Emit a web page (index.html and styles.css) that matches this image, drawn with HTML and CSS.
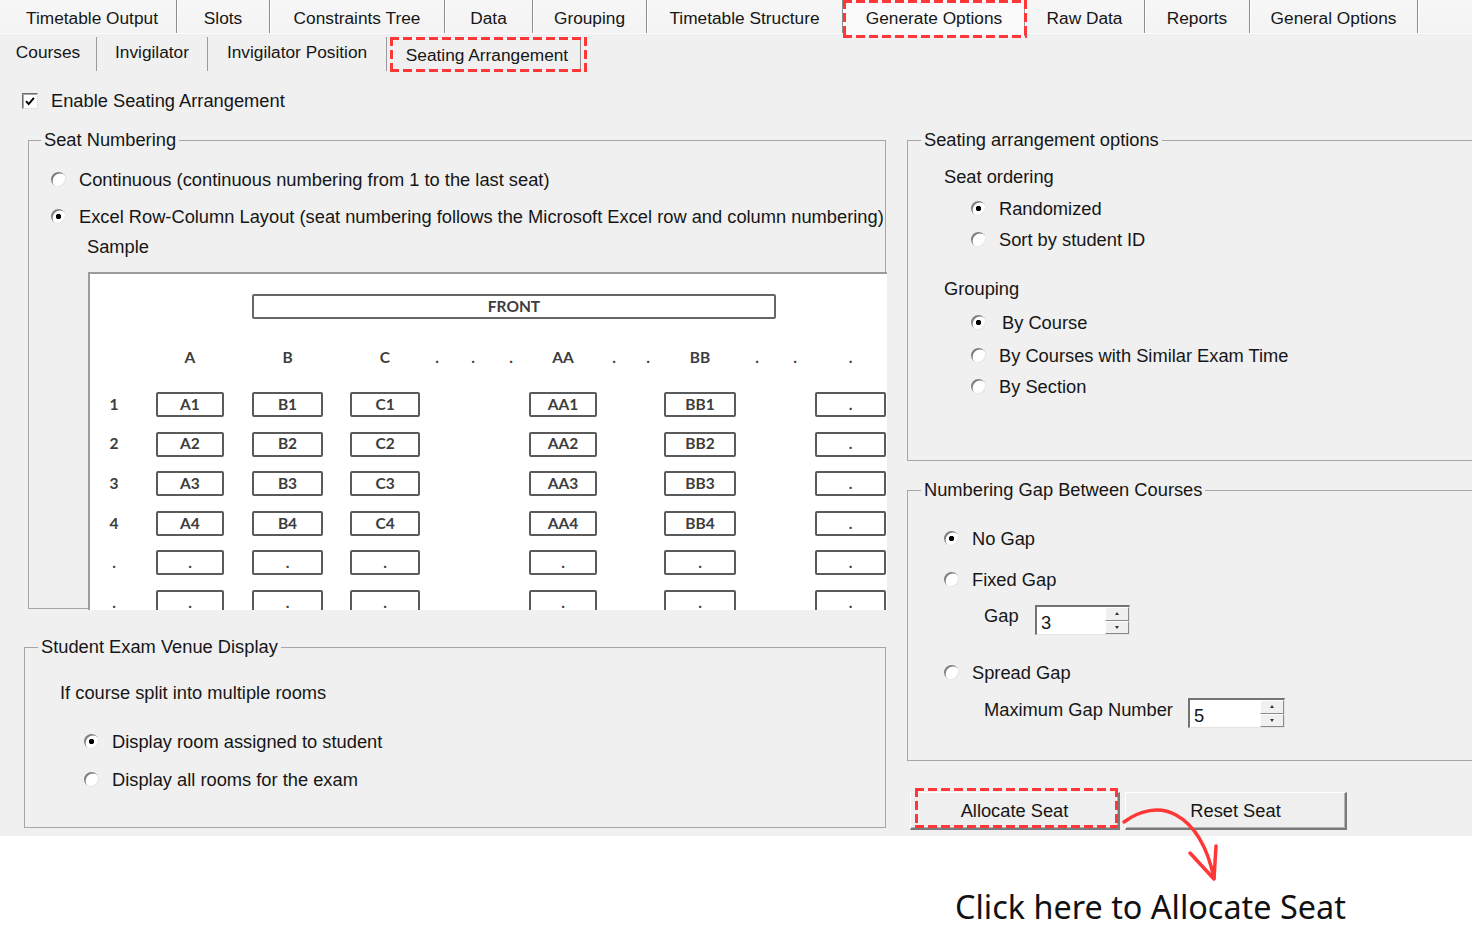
FILE: index.html
```html
<!DOCTYPE html>
<html lang="en">
<head>
<meta charset="utf-8">
<title>Seating Arrangement</title>
<link rel="stylesheet" href="styles.css">
</head>
<body>
<div class="page">
  <div class="app">
    <nav class="tabs tabs-main">
      <div class="tab w1">Timetable Output</div>
      <div class="tab w2">Slots</div>
      <div class="tab w3">Constraints Tree</div>
      <div class="tab w4">Data</div>
      <div class="tab w5">Grouping</div>
      <div class="tab w6">Timetable Structure</div>
      <div class="tab w7 selected hl hl-gen">Generate Options</div>
      <div class="tab w8">Raw Data</div>
      <div class="tab w9">Reports</div>
      <div class="tab w10">General Options</div>
    </nav>
    <nav class="tabs tabs-sub">
      <div class="tab s1">Courses</div>
      <div class="tab s2">Invigilator</div>
      <div class="tab s3">Invigilator Position</div>
      <div class="tab s4 selected hl hl-seat">Seating Arrangement</div>
    </nav>

    <div class="check-row">
      <span class="checkbox"><svg viewBox="0 0 16 16"><path d="M3.5 7.5 6.5 11 12.5 3.8"/></svg></span>
      <span>Enable Seating Arrangement</span>
    </div>

    <div class="columns">
      <div class="col-left">
        <fieldset class="group g-seat">
          <legend>Seat Numbering</legend>
          <div class="radio-row r1"><span class="radio"></span>Continuous (continuous numbering from 1 to the last seat)</div>
          <div class="radio-row r2"><span class="radio on"></span>Excel Row-Column Layout (seat numbering follows the Microsoft Excel row and column numbering)</div>
          <div class="sample-label">Sample</div>
          <div class="sample">
            <div class="front">FRONT</div>
            <div class="seat-grid head">
              <span class="h ca">A</span><span class="h cb">B</span><span class="h cc">C</span>
              <span class="h d1">.</span><span class="h d2">.</span><span class="h d3">.</span>
              <span class="h caa">AA</span>
              <span class="h d4">.</span><span class="h d5">.</span>
              <span class="h cbb">BB</span>
              <span class="h d6">.</span><span class="h d7">.</span>
              <span class="h cz">.</span>
            </div>
            <div class="seat-grid seats">
              <span class="rl">1</span><span class="seat ca">A1</span><span class="seat cb">B1</span><span class="seat cc">C1</span><span class="seat caa">AA1</span><span class="seat cbb">BB1</span><span class="seat cz">.</span>
              <span class="rl">2</span><span class="seat ca">A2</span><span class="seat cb">B2</span><span class="seat cc">C2</span><span class="seat caa">AA2</span><span class="seat cbb">BB2</span><span class="seat cz">.</span>
              <span class="rl">3</span><span class="seat ca">A3</span><span class="seat cb">B3</span><span class="seat cc">C3</span><span class="seat caa">AA3</span><span class="seat cbb">BB3</span><span class="seat cz">.</span>
              <span class="rl">4</span><span class="seat ca">A4</span><span class="seat cb">B4</span><span class="seat cc">C4</span><span class="seat caa">AA4</span><span class="seat cbb">BB4</span><span class="seat cz">.</span>
              <span class="rl">.</span><span class="seat ca">.</span><span class="seat cb">.</span><span class="seat cc">.</span><span class="seat caa">.</span><span class="seat cbb">.</span><span class="seat cz">.</span>
              <span class="rl">.</span><span class="seat ca">.</span><span class="seat cb">.</span><span class="seat cc">.</span><span class="seat caa">.</span><span class="seat cbb">.</span><span class="seat cz">.</span>
            </div>
          </div>
        </fieldset>

        <fieldset class="group g-venue">
          <legend>Student Exam Venue Display</legend>
          <div class="venue-intro">If course split into multiple rooms</div>
          <div class="radio-row v1"><span class="radio on"></span>Display room assigned to student</div>
          <div class="radio-row v2"><span class="radio"></span>Display all rooms for the exam</div>
        </fieldset>
      </div>

      <div class="col-right">
        <fieldset class="group g-opts">
          <legend>Seating arrangement options</legend>
          <div class="sub-label first">Seat ordering</div>
          <div class="radio-row o1"><span class="radio on"></span>Randomized</div>
          <div class="radio-row o2"><span class="radio"></span>Sort by student ID</div>
          <div class="sub-label second">Grouping</div>
          <div class="radio-row o3"><span class="radio on wide"></span>By Course</div>
          <div class="radio-row o4"><span class="radio"></span>By Courses with Similar Exam Time</div>
          <div class="radio-row o5"><span class="radio"></span>By Section</div>
        </fieldset>

        <fieldset class="group g-gap">
          <legend>Numbering Gap Between Courses</legend>
          <div class="radio-row n1"><span class="radio on"></span>No Gap</div>
          <div class="radio-row n2"><span class="radio"></span>Fixed Gap</div>
          <div class="field-row f1">
            <span class="field-label gap-label">Gap</span>
            <div class="spin s-gap"><span class="spin-val">3</span><span class="spin-btns"><span class="up"></span><span class="down"></span></span></div>
          </div>
          <div class="radio-row n3"><span class="radio"></span>Spread Gap</div>
          <div class="field-row f2">
            <span class="field-label max-label">Maximum Gap Number</span>
            <div class="spin s-max"><span class="spin-val">5</span><span class="spin-btns"><span class="up"></span><span class="down"></span></span></div>
          </div>
        </fieldset>

        <div class="buttons">
          <button class="btn btn-alloc hl hl-btn" type="button">Allocate Seat</button>
          <button class="btn btn-reset" type="button">Reset Seat</button>
        </div>
      </div>
    </div>
  </div>

  <div class="note">Click here to Allocate Seat</div>

  <svg class="arrow" viewBox="0 0 1472 932" width="1472" height="932">
    <path d="M1124 822 C1140 810, 1160 806, 1176 815 C1196 826, 1208 850, 1214 878"/>
    <path d="M1190 853 L1214 879 L1216 846"/>
  </svg>
</div>
</body>
</html>
```

FILE: styles.css
```css
* { box-sizing: border-box; }

html, body {
  margin: 0;
  padding: 0;
  background: #ffffff;
}

body {
  font-family: "Liberation Sans", Arial, sans-serif;
  font-size: 18.3px;
  color: #161616;
}

.page {
  position: relative;
  width: 1472px;
  height: 932px;
  overflow: hidden;
}

.app {
  height: 836px;
  background: #f0f0f0;
  overflow: hidden;
}

/* ---------- tabs ---------- */
.tabs {
  display: flex;
  font-size: 17.3px;
}

.tab {
  position: relative;
  display: flex;
  align-items: center;
  justify-content: center;
  white-space: nowrap;
  flex: none;
}

.tabs-main {
  height: 34px;
  padding-left: 8px;
  background: linear-gradient(#f7f7f7, #f3f3f3);
  border-bottom: 1px solid #fdfdfd;
}

.tabs-main .tab {
  height: 33px;
  padding-top: 4px;
  border-right: 1px solid #8c8c8c;
  box-shadow: 1px 0 0 #ffffff;
}

.tabs-main .selected {
  padding-top: 0;
  background: #fafafa;
  border-left: 1px solid #ffffff;
  border-right: 1px solid #9a9a9a;
  height: 36px;
}

.w1 { width: 169px; }
.w2 { width: 93px; }
.w3 { width: 175px; }
.w4 { width: 88px; }
.w5 { width: 114px; }
.w6 { width: 196px; }
.w7 { width: 182px; }
.w8 { width: 120px; }
.w9 { width: 105px; }
.w10 { width: 168px; }

.tabs-sub {
  height: 38px;
}

.tabs-sub .tab {
  height: 34px;
  margin-top: 3px;
  padding-bottom: 4px;
  border-right: 1px solid #9a9a9a;
}

.s1 { width: 97px; }
.s2 { width: 111px; }
.s3 { width: 179px; }

.tabs-sub .s4 {
  width: 188px;
  margin-left: 6px;
  margin-top: 4px;
  padding-bottom: 0;
  border-left: 1px solid #ffffff;
  border-top: 1px solid #ffffff;
  border-right: 1px solid #8c8c8c;
}

/* ---------- red dashed highlight ---------- */
.hl::after {
  content: "";
  position: absolute;
  pointer-events: none;
  background:
    repeating-linear-gradient(90deg, #ff3737 0 9px, transparent 9px 13px) top left / 100% 3px no-repeat,
    repeating-linear-gradient(90deg, #ff3737 0 9px, transparent 9px 13px) bottom left / 100% 3px no-repeat,
    repeating-linear-gradient(180deg, #ff3737 0 9px, transparent 9px 13px) top left / 3px 100% no-repeat,
    repeating-linear-gradient(180deg, #ff3737 0 9px, transparent 9px 13px) top right / 3px 100% no-repeat;
}

.hl-gen::after { left: -1px; right: -3px; top: 0; bottom: -2px; }
.hl-seat::after { left: -4px; right: -7px; top: -2px; bottom: 0; }
.hl-btn::after { left: 4px; right: 0; top: -5px; bottom: 0; }

/* ---------- checkbox ---------- */
.check-row {
  display: flex;
  align-items: center;
  height: 22px;
  margin: 18px 0 17px 22px;
  gap: 13px;
}

.checkbox {
  width: 16px;
  height: 16px;
  background: #ffffff;
  border-top: 1px solid #6f6f6f;
  border-left: 1px solid #6f6f6f;
  border-right: 1px solid #e2e2e2;
  border-bottom: 1px solid #e2e2e2;
  box-shadow: inset 1px 1px 0 #a8a8a8;
  display: flex;
}

.checkbox svg {
  width: 15px;
  height: 15px;
  fill: none;
  stroke: #000;
  stroke-width: 2.2;
}

/* ---------- columns ---------- */
.columns {
  display: flex;
  align-items: flex-start;
}

.col-left {
  width: 886px;
  flex: none;
}

.col-right {
  width: 600px;
  margin-left: 21px;
  flex: none;
}

/* ---------- group boxes ---------- */
.group {
  margin: 0;
  padding: 0;
  min-width: 0;
  border: 1px solid #a6a6a6;
}

.group legend {
  padding: 0 3px;
  margin-left: 13px;
  line-height: 22px;
  font-size: 18.3px;
  white-space: nowrap;
}

.radio-row {
  display: flex;
  align-items: center;
  height: 22px;
  padding-top: 1px;
  white-space: nowrap;
}

.radio {
  flex: none;
  width: 15px;
  height: 15px;
  margin-right: 13px;
  border-radius: 50%;
  background: #ffffff;
  box-shadow: inset 1.6px 1.6px 0 #7e7e7e, inset -1px -1px 0 #e6e6e6;
}

.radio.on {
  background: radial-gradient(circle at 50% 50%, #000 0 2.4px, #ffffff 3px);
}

.radio.wide { margin-right: 16px; }

/* seat numbering */
.g-seat {
  margin-left: 28px;
  width: 858px;
}

.g-seat legend { margin-left: 12px; }

.g-seat .radio-row { padding-left: 22px; }
.g-seat .r1 { margin-top: 17px; }
.g-seat .r2 { margin-top: 15px; }

.sample-label {
  margin-top: 9px;
  padding-left: 58px;
  line-height: 22px;
}

.sample {
  margin-top: 14px;
  margin-left: 59px;
  margin-bottom: -2px;
  width: 799px;
  height: 338px;
  overflow: hidden;
  background: #ffffff;
  border-top: 2px solid #9c9c9c;
  border-left: 2px solid #9c9c9c;
  font-family: Lato, "Open Sans", sans-serif;
  font-weight: 700;
  font-size: 15.5px;
  color: #3d3d3d;
}

.front {
  margin-top: 20px;
  margin-left: 162px;
  width: 524px;
  height: 25px;
  border: 2px solid #666666;
  border-radius: 2px;
  display: flex;
  align-items: center;
  justify-content: center;
  line-height: 1;
}

.seat-grid {
  display: grid;
  grid-template-columns: 48px 18px 68px 28px 71px 27px 70px 9px 16px 20px 16px 22px 16px 10px 68px 9px 16px 18px 16px 8px 72px 13px 16px 22px 16px 12px 71px;
}

.seat-grid.head {
  margin-top: 26px;
  grid-template-rows: 25px;
}

.seat-grid.seats {
  margin-top: 22px;
  grid-auto-rows: 25px;
  row-gap: 14.6px;
}

.seat-grid span {
  display: flex;
  align-items: center;
  justify-content: center;
  line-height: 1;
}

.rl { grid-column: 1; }
.ca { grid-column: 3; }
.cb { grid-column: 5; }
.cc { grid-column: 7; }
.d1 { grid-column: 9; }
.d2 { grid-column: 11; }
.d3 { grid-column: 13; }
.caa { grid-column: 15; }
.d4 { grid-column: 17; }
.d5 { grid-column: 19; }
.cbb { grid-column: 21; }
.d6 { grid-column: 23; }
.d7 { grid-column: 25; }
.cz { grid-column: 27; }

.seat-grid .seat {
  border: 2px solid #5a5a5a;
  border-radius: 2px;
  background: #ffffff;
}

/* venue */
.g-venue {
  margin-top: 27px;
  margin-left: 24px;
  width: 862px;
  padding-bottom: 37px;
}

.venue-intro {
  margin-top: 24px;
  padding-left: 35px;
  line-height: 22px;
}

.g-venue .radio-row { padding-left: 59px; }
.g-venue .v1 { margin-top: 26px; }
.g-venue .v2 { margin-top: 16px; }

/* right options */
.g-opts {
  width: 600px;
  height: 332px;
}

.sub-label {
  padding-left: 36px;
  line-height: 22px;
  padding-top: 1px;
}

.sub-label.first { margin-top: 14px; }
.sub-label.second { margin-top: 27px; }

.g-opts .radio-row { padding-left: 63px; }
.g-opts .o1, .g-opts .o2 { margin-top: 9px; }
.g-opts .o3, .g-opts .o4 { margin-top: 11px; }
.g-opts .o5 { margin-top: 9px; }

.g-gap {
  margin-top: 18px;
  width: 600px;
  height: 282px;
}

.g-gap .radio-row { padding-left: 36px; }
.g-gap .n1 { margin-top: 26px; }
.g-gap .n2 { margin-top: 19px; }
.g-gap .n3 { margin-top: 26px; }

.field-row {
  display: flex;
  align-items: flex-start;
  margin-top: 15px;
  padding-left: 76px;
}

.field-label {
  line-height: 22px;
  white-space: nowrap;
}

.f2 .field-label { margin-top: 1px; }

.gap-label { width: 51px; }
.max-label { width: 204px; }

.spin {
  display: flex;
  height: 30px;
  background: #ffffff;
  border-top: 2px solid #737373;
  border-left: 2px solid #737373;
  border-right: 1px solid #e4e4e4;
  border-bottom: 1px solid #e4e4e4;
}

.s-gap { width: 95px; }
.s-max { width: 97px; }

.spin-val {
  flex: 1;
  padding-left: 4px;
  padding-top: 5px;
  line-height: 22px;
}

.spin-btns {
  width: 24px;
  display: flex;
  flex-direction: column;
}

.spin-btns span {
  flex: 1;
  background: #f0f0f0;
  border-top: 1px solid #ffffff;
  border-left: 1px solid #ffffff;
  border-right: 1px solid #8a8a8a;
  border-bottom: 1px solid #8a8a8a;
  display: flex;
  align-items: center;
  justify-content: center;
}

.spin-btns .up::before {
  content: "";
  border-left: 2.5px solid transparent;
  border-right: 2.5px solid transparent;
  border-bottom: 3px solid #333;
}

.spin-btns .down::before {
  content: "";
  border-left: 2.5px solid transparent;
  border-right: 2.5px solid transparent;
  border-top: 3px solid #333;
}

/* buttons */
.buttons {
  display: flex;
  gap: 5px;
  margin-top: 31px;
  padding-left: 3px;
}

.btn {
  position: relative;
  height: 38px;
  margin: 0;
  padding: 0;
  font-family: "Liberation Sans", Arial, sans-serif;
  font-size: 18.3px;
  color: #161616;
  background: #efefef;
  border-top: 1px solid #ffffff;
  border-left: 1px solid #ffffff;
  border-right: 2px solid #7a7a7a;
  border-bottom: 2px solid #7a7a7a;
  box-shadow: inset -1px -1px 0 #b4b4b4;
}

.btn-alloc { width: 210px; }
.btn-reset { width: 222px; }

/* annotation */
.note {
  margin-top: 50px;
  padding-left: 955px;
  font-family: "Noto Sans", "Open Sans", sans-serif;
  font-size: 32.4px;
  line-height: 40px;
  color: #111111;
  white-space: nowrap;
}

.arrow {
  position: absolute;
  left: 0;
  top: 0;
  pointer-events: none;
  fill: none;
  stroke: #ff3737;
  stroke-width: 3.5;
  stroke-linecap: round;
  stroke-linejoin: round;
}
```
